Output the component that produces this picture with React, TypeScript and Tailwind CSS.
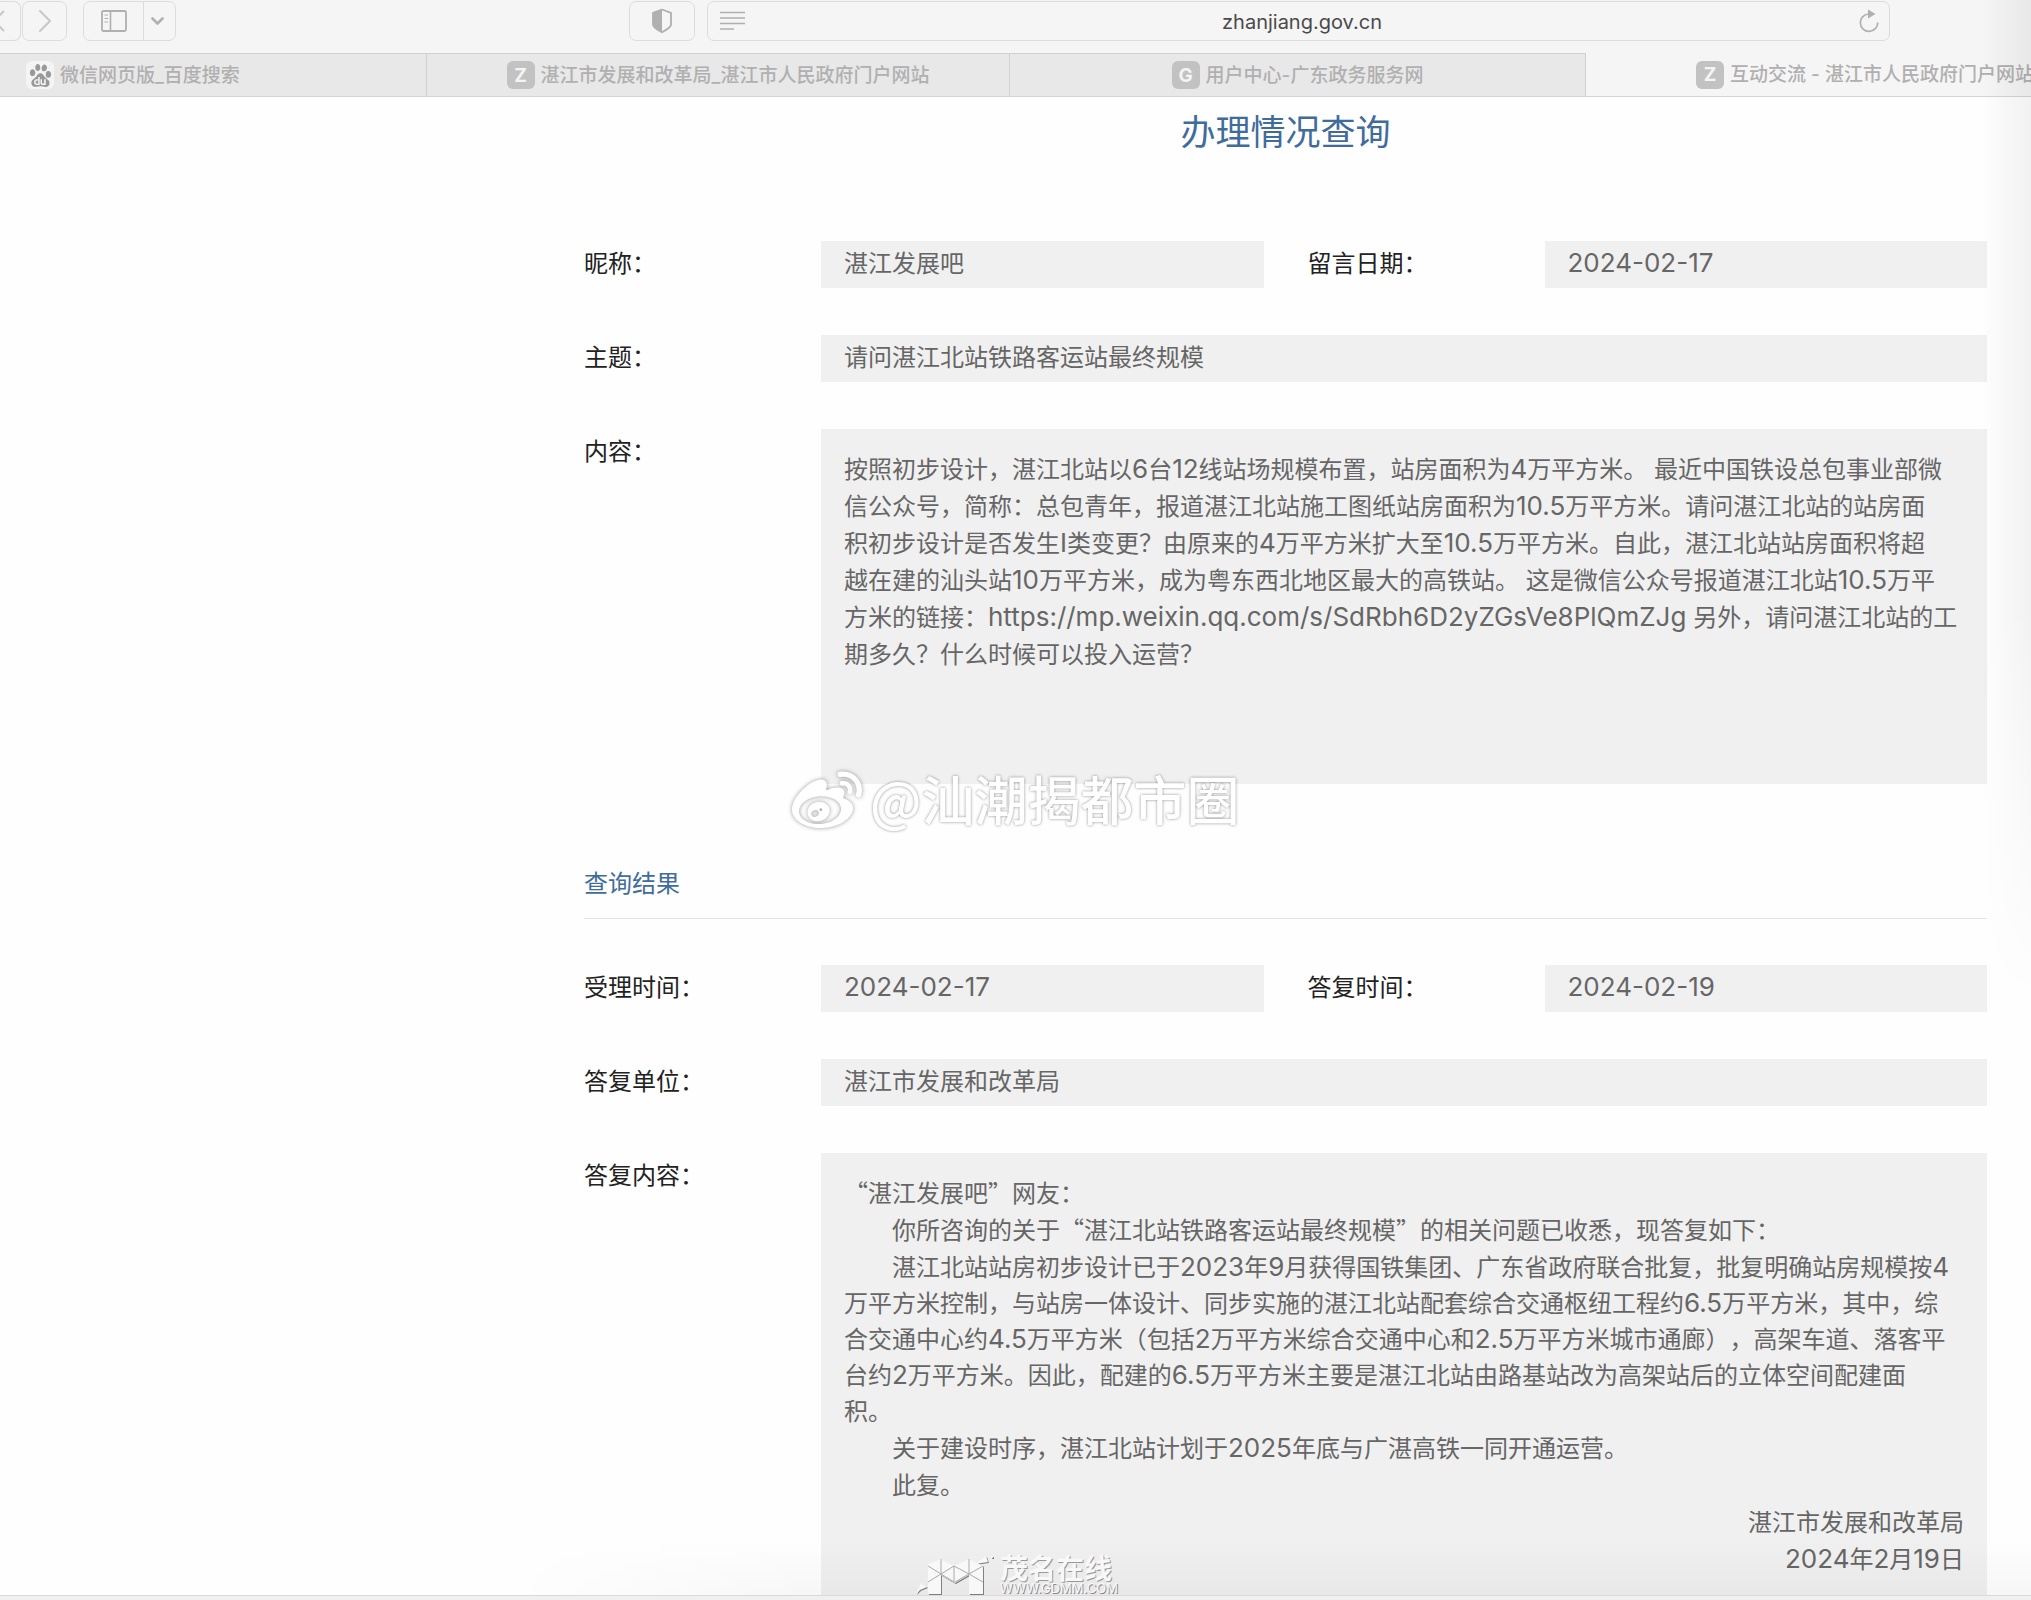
import type { ReactNode } from "react";
import { FaWeibo } from "react-icons/fa";
import { SiBaidu } from "react-icons/si";

const cjkFont = "font-['Noto_Sans_CJK_SC',sans-serif]";
const mixedFont = "font-['Inter','Noto_Sans_CJK_SC',sans-serif]";
const indentFirst = "[&>span:first-child]:pl-12";

const question = [
  "按照初步设计，湛江北站以6台12线站场规模布置，站房面积为4万平方米。 最近中国铁设总包事业部微",
  "信公众号，简称：总包青年，报道湛江北站施工图纸站房面积为10.5万平方米。请问湛江北站的站房面",
  "积初步设计是否发生I类变更？由原来的4万平方米扩大至10.5万平方米。自此，湛江北站站房面积将超",
  "越在建的汕头站10万平方米，成为粤东西北地区最大的高铁站。 这是微信公众号报道湛江北站10.5万平",
  "方米的链接：https://mp.weixin.qq.com/s/SdRbh6D2yZGsVe8PlQmZJg 另外，请问湛江北站的工",
  "期多久？什么时候可以投入运营？",
];

const reply = [
  { lines: ["“湛江发展吧”网友："], className: "" },
  { lines: ["你所咨询的关于“湛江北站铁路客运站最终规模”的相关问题已收悉，现答复如下："], className: indentFirst },
  {
    lines: [
      "湛江北站站房初步设计已于2023年9月获得国铁集团、广东省政府联合批复，批复明确站房规模按4",
      "万平方米控制，与站房一体设计、同步实施的湛江北站配套综合交通枢纽工程约6.5万平方米，其中，综",
      "合交通中心约4.5万平方米（包括2万平方米综合交通中心和2.5万平方米城市通廊），高架车道、落客平",
      "台约2万平方米。因此，配建的6.5万平方米主要是湛江北站由路基站改为高架站后的立体空间配建面",
      "积。",
    ],
    className: indentFirst,
  },
  { lines: ["关于建设时序，湛江北站计划于2025年底与广湛高铁一同开通运营。"], className: indentFirst },
  { lines: ["此复。"], className: indentFirst },
  { lines: ["湛江市发展和改革局"], className: "text-right" },
  { lines: ["2024年2月19日"], className: "text-right" },
];

// Latin runs are set a little larger, curly quotes take the full-width Chinese shapes
function Mixed({ text }: { text: string }) {
  return (
    <>
      {text.split(/([“”]|[!-~]+)/).map((part, i) => {
        if (part === "“" || part === "”") {
          return (
            <span key={i} className={`${cjkFont} leading-none`}>
              {part}
            </span>
          );
        }
        if (/^[!-~]/.test(part)) {
          return (
            <span key={i} className="text-[26px] leading-none">
              {part}
            </span>
          );
        }
        return part;
      })}
    </>
  );
}

function Lines({ lines }: { lines: string[] }) {
  return (
    <>
      {lines.map((line) => (
        <span key={line} className="block">
          <Mixed text={line} />
        </span>
      ))}
    </>
  );
}

function Field({ label, children }: { label: string; children: ReactNode }) {
  return (
    <div className="flex">
      <dt className="w-[237px] shrink-0 pt-[5px] leading-[36px] text-[#222]">{label}</dt>
      <dd className="min-w-0 flex-1 bg-[#f0f0f0] px-[23px] pt-[5px] pb-1.5 leading-[36px] text-[#666]">{children}</dd>
    </div>
  );
}

function LetterIcon({ letter }: { letter: string }) {
  return (
    <span className="flex size-7 shrink-0 items-center justify-center rounded-md bg-[#c2c2c2] text-[19px] leading-none font-bold text-[#f4f4f4]">
      {letter}
    </span>
  );
}

function Toolbar() {
  return (
    <div className="flex h-[53px] items-start bg-[#f5f5f5] pt-px pr-[141px] text-[#b0b0b0]">
      <button
        type="button"
        aria-label="后退"
        className="flex h-10 w-[21px] items-center rounded-r-[7px] border border-l-0 border-[#dcdcdc] text-[#c8c8c8]"
      >
        <svg width="5" height="22" viewBox="0 0 5 22" fill="none" stroke="currentColor" strokeWidth="2">
          <path d="M4 1-6 11 4 21" />
        </svg>
      </button>
      <button
        type="button"
        aria-label="前进"
        className="ml-px flex h-10 w-[45px] items-center justify-center rounded-[7px] border border-[#dcdcdc] text-[#c8c8c8]"
      >
        <svg width="12" height="22" viewBox="0 0 12 22" fill="none" stroke="currentColor" strokeWidth="2" strokeLinecap="round">
          <path d="M1 1 11 11 1 21" />
        </svg>
      </button>
      <div className="ml-4 flex h-10 w-[93px] rounded-[7px] border border-[#dcdcdc]">
        <button type="button" aria-label="边栏" className="flex w-[60px] items-center justify-center border-r border-[#dcdcdc]">
          <svg width="26" height="22" viewBox="0 0 26 22" fill="none" stroke="currentColor">
            <rect x="1" y="1" width="24" height="20" rx="1.5" strokeWidth="1.8" />
            <path d="M9.5 1v20" strokeWidth="1.6" />
            <path d="M3.5 5H7M3.5 8.5H7M3.5 12H7" strokeWidth="1.2" />
          </svg>
        </button>
        <button type="button" aria-label="边栏选项" className="flex flex-1 items-center justify-center pr-1">
          <svg width="13" height="8" viewBox="0 0 13 8" fill="none" stroke="currentColor" strokeWidth="2.6" strokeLinecap="round">
            <path d="M1.5 1.5 6.5 6.5 11.5 1.5" />
          </svg>
        </button>
      </div>
      <button
        type="button"
        aria-label="隐私报告"
        className="ml-[453px] flex h-10 w-[66px] shrink-0 items-center justify-center rounded-[7px] border border-[#dcdcdc]"
      >
        <svg width="22" height="26" viewBox="0 0 22 26" fill="none">
          <path d="M11 1.5 20 4.8V17Q19.5 19.5 11 24.3 2.5 19.5 2 17V4.8Z" stroke="currentColor" strokeWidth="1.8" strokeLinejoin="round" />
          <path d="M11 1.5V24.3Q2.5 19.5 2 17V4.8Z" fill="currentColor" />
        </svg>
      </button>
      <div className="ml-3 flex h-10 min-w-0 flex-1 items-center rounded-[7px] border border-[#dcdcdc] pr-2.5 pl-3">
        <svg width="25" height="20" viewBox="0 0 25 20" stroke="currentColor" strokeWidth="1.7">
          <path d="M0 1.5H25M0 7H25M0 12.5H25M0 18H14" />
        </svg>
        <input
          aria-label="地址"
          readOnly
          value="zhanjiang.gov.cn"
          className="min-w-0 flex-1 bg-transparent pt-0.5 text-center text-[20px] text-[#4a4a4a] outline-none"
        />
        <button type="button" aria-label="重新载入">
          <svg width="20" height="24" viewBox="0 0 20 24" fill="none">
            <path d="M9.5 5A8.7 8.7 0 1 0 18.7 13.5" stroke="currentColor" strokeWidth="1.7" />
            <path d="M9 .5 16.5 5 9 9.5Z" fill="currentColor" />
          </svg>
        </button>
      </div>
    </div>
  );
}

function TabBar() {
  const tab = "flex min-w-0 items-center gap-1.5 overflow-hidden whitespace-nowrap";
  const idle = "border-t border-r border-[#d0d0d0] bg-[#e8e8e8]";
  return (
    <div
      role="tablist"
      className="grid h-[44px] grid-cols-[427fr_583fr_576fr_445fr] border-b border-[#d4d4d4] bg-[#f5f5f5] text-[19px] font-medium text-[#b0b0b0]"
    >
      <button role="tab" type="button" className={`${tab} ${idle} pl-[26px]`}>
        <span className="flex size-7 shrink-0 items-center justify-center rounded-md bg-[#f4f4f4] text-[#999]">
          <SiBaidu size={23} />
        </span>
        <span className="pt-0.5">微信网页版_百度搜索</span>
      </button>
      <button role="tab" type="button" className={`${tab} ${idle} justify-center`}>
        <LetterIcon letter="Z" />
        <span className="pt-0.5">湛江市发展和改革局_湛江市人民政府门户网站</span>
      </button>
      <button role="tab" type="button" className={`${tab} ${idle} justify-center`}>
        <LetterIcon letter="G" />
        <span className="pt-0.5">用户中心-广东政务服务网</span>
      </button>
      <button role="tab" type="button" aria-selected="true" className={`${tab} pl-[110px]`}>
        <LetterIcon letter="Z" />
        <span className="pt-0.5">互动交流 - 湛江市人民政府门户网站</span>
      </button>
    </div>
  );
}

function WeiboMark() {
  return (
    <div className="absolute top-[760px] left-[792px] flex items-center gap-2 text-white">
      <FaWeibo size={70} className="drop-shadow-[0_0_2px_rgba(0,0,0,0.4)]" />
      <span
        className={`${cjkFont} pb-2 text-[53px] leading-[76px] font-medium whitespace-nowrap [text-shadow:0_0_3px_rgba(0,0,0,0.45)]`}
      >
        @汕潮揭都市圈
      </span>
    </div>
  );
}

function SiteMark() {
  return (
    <div className="absolute top-[1554px] left-[916px] flex gap-1.5 text-[#f8f8f8]">
      <svg width="78" height="42" viewBox="0 0 78 42" className="drop-shadow-[1px_1px_0_rgba(0,0,0,0.45)]">
        <g fill="currentColor">
          <path d="M12 10 25 5 38 12 53 5 67 12V40H53V21L39 29 25 21V40H12Z" />
          <path d="M0 40 5 29 11 33 4 36ZM59 10 70 2 72 8ZM75 2h2v2h-2Z" />
        </g>
        <path
          d="M25 5V20M12 12 25 20 38 12M12 28 25 20 38 28M53 5V20M38 12 53 20 67 12M39 28 53 20 67 28M38 12V28"
          fill="none"
          stroke="#aaa"
        />
      </svg>
      <div>
        <p className={`${cjkFont} text-[28px] leading-[26px] font-bold [text-shadow:1px_1px_0_#999]`}>茂名在线</p>
        <p className="text-[13px] leading-[16px] [text-shadow:1px_1px_0_#888]">WWW.GDMM.COM</p>
      </div>
    </div>
  );
}

export default function App() {
  return (
    <div className={`relative overflow-hidden bg-[#fefefe] ${mixedFont}`}>
      <Toolbar />
      <TabBar />
      <main className="pr-[44px] pl-[584px] text-[24px]">
        <h1 className="pt-[9px] text-center text-[35px] leading-[52px] text-[#3f6c9c]">办理情况查询</h1>

        <dl className="mt-[83px] space-y-[47px]">
          <div className="grid grid-cols-2 gap-x-[44px]">
            <Field label="昵称：">湛江发展吧</Field>
            <Field label="留言日期：">
              <Mixed text="2024-02-17" />
            </Field>
          </div>
          <Field label="主题：">请问湛江北站铁路客运站最终规模</Field>
          <Field label="内容：">
            <p className="min-h-[344px] pt-[17px] leading-[37px] [text-spacing-trim:space-all]">
              <Lines lines={question} />
            </p>
          </Field>
        </dl>

        <h2 className="mt-[82px] border-b border-[#e4e4e4] pb-4 leading-[36px] text-[#3f6c9c]">查询结果</h2>

        <dl className="mt-[46px] space-y-[47px]">
          <div className="grid grid-cols-2 gap-x-[44px]">
            <Field label="受理时间：">
              <Mixed text="2024-02-17" />
            </Field>
            <Field label="答复时间：">
              <Mixed text="2024-02-19" />
            </Field>
          </div>
          <Field label="答复单位：">湛江市发展和改革局</Field>
          <Field label="答复内容：">
            <div className="space-y-px pt-[18px] pb-[11px] [text-spacing-trim:space-all]">
              {reply.map((paragraph) => (
                <p key={paragraph.lines[0]} className={paragraph.className}>
                  <Lines lines={paragraph.lines} />
                </p>
              ))}
            </div>
          </Field>
        </dl>
      </main>
      <footer className="h-[5px] border-t border-[#dadada] bg-[#f0f0f0]" />

      <div className="pointer-events-none absolute top-0 right-0 h-[1000px] w-[50px] bg-linear-to-r from-transparent to-black/5 mask-b-from-60%" />
      <div className="pointer-events-none absolute right-0 bottom-[5px] h-[55px] w-3/4 bg-linear-to-b from-transparent to-black/3 mask-l-from-80%" />
      <WeiboMark />
      <SiteMark />
    </div>
  );
}
